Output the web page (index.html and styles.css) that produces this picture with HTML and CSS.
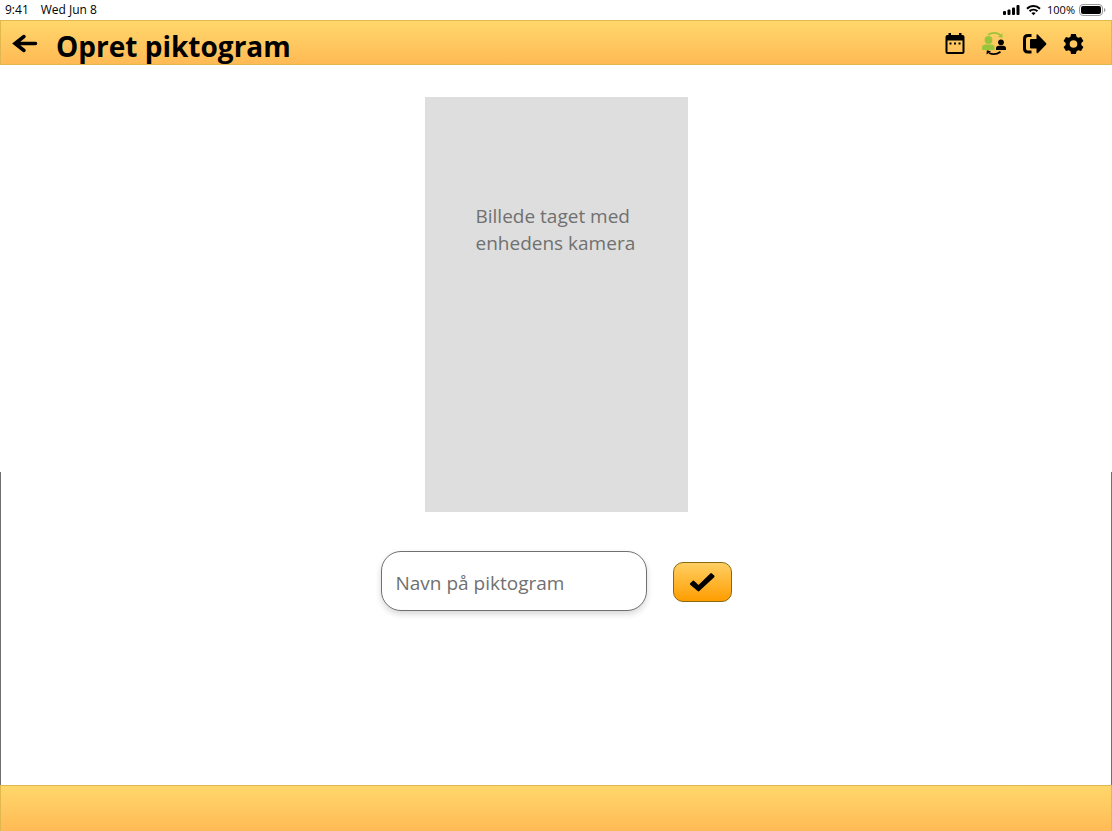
FILE: index.html
```html
<!DOCTYPE html>
<html lang="da">
<head>
<meta charset="utf-8">
<meta name="viewport" content="width=device-width, initial-scale=1">
<title>Opret piktogram</title>
<link rel="stylesheet" href="styles.css">
</head>
<body>
<div class="status">
  <div class="status-group status-time"><span>9:41</span><span>Wed Jun 8</span></div>
  <div class="status-group">
    <svg class="signal" width="17" height="10" viewBox="0 0 17 10" aria-hidden="true"><rect x="0" y="6" width="3" height="4" rx="1"/><rect x="4.5" y="4.5" width="3" height="5.500" rx="1"/><rect x="9" y="2.500" width="3" height="7.500" rx="1"/><rect x="13.500" y="0" width="3" height="10" rx="1"/></svg>
    <svg class="wifi" width="15" height="11" viewBox="0 0 15 11" aria-hidden="true"><path d="M7.500 0C4.700 0 2.200 1.100.300 2.900L1.700 4.400a8.400 8.400 0 0 1 11.600 0l1.400-1.500A10.500 10.500 0 0 0 7.500 0zM7.500 3.700c-1.800 0-3.400.7-4.700 1.900l1.500 1.500a4.700 4.700 0 0 1 6.400 0l1.500-1.500a6.900 6.900 0 0 0-4.700-1.900zM7.500 7.300c-.8 0-1.500.3-2.100.8l2.100 2.200 2.100-2.200c-.6-.5-1.300-.8-2.100-.8z"/></svg>
    <span class="percent">100%</span>
    <svg width="27" height="12" viewBox="0 0 27 12" aria-hidden="true"><rect x=".5" y=".5" width="23" height="11" rx="3.500" fill="none" stroke="#999"/><rect x="2" y="2" width="20" height="8" rx="2"/><path d="M25 4v4q1.500-.6 1.500-2T25 4z" fill="#999"/></svg>
  </div>
</div>

<header class="bar header">
  <button class="icon-button" type="button" aria-label="Tilbage">
    <svg width="27" height="20" viewBox="0 0 27 20" fill="none" stroke="#000" stroke-width="3.500" stroke-linecap="round" stroke-linejoin="miter"><path d="M4 9.500h20.500M13 2.500L4 9.500l9 7"/></svg>
  </button>
  <h1 class="title">Opret piktogram</h1>
  <nav class="actions">
    <button class="icon-button" type="button" aria-label="Kalender">
      <svg width="20" height="22" viewBox="0 0 20 22"><path fill-rule="evenodd" d="M3.500 0H6v2h8V0h2.500v2h1A2 2 0 0 1 19.500 4v15a2 2 0 0 1-2 2h-15a2 2 0 0 1-2-2V4a2 2 0 0 1 2-2h1zM2.500 7.500V19h15V7.500z"/><path d="M4.500 9.500h2v2h-2zM9 9.500h2v2H9zM13.500 9.500h2v2h-2z"/></svg>
    </button>
    <button class="icon-button" type="button" aria-label="Skift borger">
      <svg width="26" height="24" viewBox="0 0 26 24"><g fill="#9ac43c"><circle cx="7.500" cy="8" r="3.900"/><path d="M1 18v-2.500Q1 12.500 4.500 12.500h5.500q3.500 0 3.500 3V18z"/></g><circle cx="20" cy="10.300" r="2.900"/><path d="M15 18v-1.500q0-2.700 3-2.700h4q3 0 3 2.700V18z"/><path d="M7 2.800Q13.500-1 19.500 3" fill="none" stroke="#9ac43c" stroke-width="1.800"/><path d="M21.500 1.200v4.600L17 5z" fill="#9ac43c"/><path d="M19.500 19.800Q14 23.800 8 21" fill="none" stroke="#000" stroke-width="1.800"/><path d="M5.500 22.500l.3-4.200 4.200 1z"/></svg>
    </button>
    <button class="icon-button" type="button" aria-label="Log ud">
      <svg width="24" height="22" viewBox="0 0 24 22"><path d="M8.500 2.500H5Q1.500 2.500 1.500 6v9.500q0 3.500 3.500 3.500h3.500" fill="none" stroke="#000" stroke-width="3"/><path d="M7 7q0-1 1-1h5.500V2.500q0-2 1.500-.8l8 8.200q1 .9 0 1.800l-8 8.200q-1.500 1-1.500-1V15.500H8q-1 0-1-1z"/></svg>
    </button>
    <button class="icon-button" type="button" aria-label="Indstillinger">
      <svg width="21" height="22" viewBox="0 0 22 22"><path fill-rule="evenodd" d="M8.500.5h5l.7 3 1.800 1 2.900-.9 2.500 4.300-2.200 2.100v2l2.200 2.100-2.500 4.300-2.900-.9-1.800 1-.7 3h-5l-.7-3-1.800-1-2.900.9L.600 14.100 2.800 12v-2L.600 7.900l2.500-4.300 2.900.9 1.800-1zM11 7a4 4 0 1 0 0 8 4 4 0 0 0 0-8z"/></svg>
    </button>
  </nav>
</header>

<main class="content">
  <div class="photo"><p class="photo-text">Billede taget med enhedens kamera</p></div>
  <form class="name-form">
    <input class="name-input" type="text" aria-label="Navn på piktogram" placeholder="Navn på piktogram">
    <button class="confirm" type="button" aria-label="Godkend">
      <svg width="26" height="20" viewBox="0 0 26 20"><path d="M1.200 11.300l2.400-2.400q.8-.8 1.600 0l4.300 4.200L21.300 1.400q.8-.8 1.600 0l2.300 2.200q.8.8 0 1.600L10.300 19q-.8.800-1.600 0L1.200 12.700q-.7-.7 0-1.400z"/></svg>
    </button>
  </form>
</main>
<footer class="bar footer"></footer>
</body>
</html>
```
FILE: styles.css
```css
* {
  box-sizing: border-box;
}

body {
  margin: 0;
  min-height: 100vh;
  display: flex;
  flex-direction: column;
  background: #fff;
  color: #000;
  font-family: "Open Sans", "Noto Sans", sans-serif;
}

svg {
  display: block;
}

.status {
  display: flex;
  justify-content: space-between;
  height: 20px;
  padding: 0 6px 0 5px;
  font-size: 11px;
  line-height: 20px;
}

.status-group {
  display: flex;
  align-items: center;
}

.status-time {
  gap: 12px;
  font-size: 12px;
}

.signal {
  margin-right: 6px;
}

.wifi {
  margin-right: 6px;
}

.percent {
  margin-right: 4px;
}

.bar {
  background: linear-gradient(#ffd76b, #ffba55);
  border: 1px solid #e0b84f;
}

.header {
  display: flex;
  align-items: center;
  height: 45px;
  padding: 2px 27px 0 10px;
}

.icon-button {
  padding: 0;
  border: 0;
  background: none;
  cursor: pointer;
}

.title {
  flex: 1;
  margin: 0 0 0 18px;
  padding-top: 4px;
  font-size: 28px;
  line-height: 36px;
  font-weight: 700;
}

.actions {
  display: flex;
  align-items: center;
  gap: 16px;
}

.content {
  flex: 1;
  display: flex;
  flex-direction: column;
  align-items: center;
  gap: 39px;
  padding: 32px 16px;
  background:
    linear-gradient(#707070, #707070) left bottom / 1px 313px no-repeat,
    linear-gradient(#707070, #707070) right bottom / 1px 313px no-repeat;
}

.photo {
  width: 263px;
  aspect-ratio: 263 / 415;
  padding: 106px 48px 0 51px;
  background: #dedede;
}

.photo-text {
  margin: 0;
  color: #707070;
  font-size: 19px;
  line-height: 27px;
}

.name-form {
  display: flex;
  align-items: center;
  gap: 26px;
}

.name-input {
  width: 266px;
  height: 60px;
  padding: 4px 14px 0;
  border: 1px solid #707070;
  border-radius: 20px;
  background: #fff;
  box-shadow: 0 3px 6px rgba(0, 0, 0, 0.16);
  font: inherit;
  font-size: 19px;
}

.name-input::placeholder {
  color: #707070;
  opacity: 1;
}

.confirm {
  display: flex;
  align-items: center;
  justify-content: center;
  width: 59px;
  height: 40px;
  margin-top: 2px;
  padding: 0;
  border: 1px solid #8a6a10;
  border-radius: 10px;
  background: linear-gradient(#ffcf63, #ff9d00);
  cursor: pointer;
}

.footer {
  height: 46px;
  border-bottom: 0;
}
```
